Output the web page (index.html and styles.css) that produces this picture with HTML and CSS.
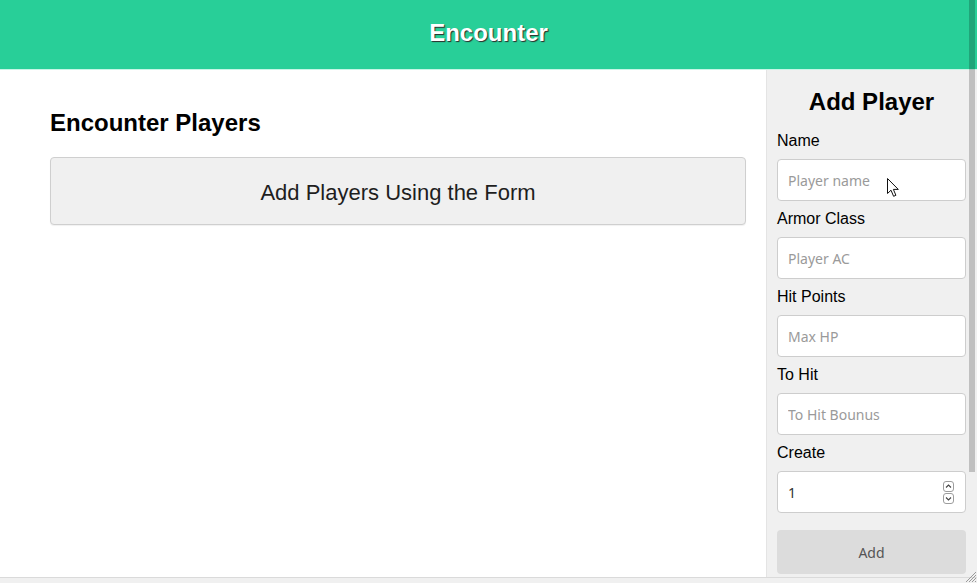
FILE: index.html
```html
<!DOCTYPE html>
<html>
<head>
<meta charset="utf-8">
<title>Encounter</title>
<link rel="stylesheet" href="styles.css">
</head>
<body>
<div class="viewport">
  <header class="topbar"><h1 class="brand">Encounter</h1></header>
  <div class="main">
    <section class="players">
      <h2 class="section-title">Encounter Players</h2>
      <div class="empty-box">Add Players Using the Form</div>
    </section>
    <aside class="sidebar">
      <h2 class="side-title">Add Player</h2>
      <label class="field-label">Name</label>
      <input class="field" type="text" placeholder="Player name">
      <label class="field-label">Armor Class</label>
      <input class="field" type="text" placeholder="Player AC">
      <label class="field-label">Hit Points</label>
      <input class="field" type="text" placeholder="Max HP">
      <label class="field-label">To Hit</label>
      <input class="field" type="text" placeholder="To Hit Bounus">
      <label class="field-label">Create</label>
      <div class="num-field">
        <input class="num-input" type="text" value="1">
        <div class="spinner">
          <span class="spin-btn"><svg width="9" height="9" viewBox="0 0 9 9"><path d="M2 5.5 L4.5 3 L7 5.5" fill="none" stroke="#444" stroke-width="1.1"/></svg></span>
          <span class="spin-btn"><svg width="9" height="9" viewBox="0 0 9 9"><path d="M2 3.5 L4.5 6 L7 3.5" fill="none" stroke="#444" stroke-width="1.1"/></svg></span>
        </div>
      </div>
      <button class="add-btn" type="button">Add</button>
    </aside>
  </div>
</div>
<div class="vscroll"><div class="vthumb"></div></div>
<div class="hscroll"></div>
<svg class="grip" width="14" height="14" viewBox="0 0 14 14">
  <path d="M13 3 L3 13 M13 6 L6 13 M13 9 L9 13 M13 12 L12 13" stroke="#9a9a9a" stroke-width="1"/>
</svg>
<svg class="cursor" width="13" height="20" viewBox="0 0 13 20">
  <path d="M0.5 0.5 L0.5 15.5 L4 12.2 L6.6 18.3 L8.9 17.3 L6.4 11.4 L11.3 11.4 Z" fill="#fff" stroke="#111" stroke-width="1" stroke-linejoin="round"/>
</svg>
</body>
</html>
```
FILE: styles.css
```css
html, body {
  margin: 0;
  padding: 0;
  overflow: hidden;
  background: #fff;
}
body {
  font-family: "Liberation Sans", Arial, sans-serif;
  color: #000;
}
.viewport {
  width: 977px;
  height: 583px;
  overflow: hidden;
}
.topbar {
  height: 69px;
  background: #28cf98;
  border-bottom: 1px solid #c6f6e6;
  display: flex;
  align-items: center;
  justify-content: center;
}
.brand {
  margin: 0;
  font-size: 24px;
  font-weight: bold;
  color: #fff;
  text-shadow: 1px 1px 1px #2b2b2b;
  line-height: 28px;
  padding-bottom: 3px;
}
.main {
  display: flex;
  min-height: 634px;
}
.players {
  flex: 1;
  padding: 39px 20px 0 50px;
}
.section-title {
  margin: 0 0 20px 0;
  font-size: 24px;
  line-height: 28px;
  font-weight: bold;
}
.empty-box {
  box-sizing: border-box;
  height: 68px;
  padding-top: 3px;
  background: #f0f0f0;
  border: 1px solid #cfcfcf;
  border-radius: 4px;
  box-shadow: 0 1px 1px rgba(0, 0, 0, 0.06);
  display: flex;
  align-items: center;
  justify-content: center;
  font-size: 22px;
  color: #1e1e1e;
}
.sidebar {
  width: 211px;
  box-sizing: border-box;
  background: #f0f0f0;
  border-left: 1px solid #e4e4e4;
  padding: 18px 11px 0 10px;
  display: flex;
  flex-direction: column;
}
.side-title {
  margin: 0 0 7px 0;
  font-size: 24px;
  line-height: 28px;
  font-weight: bold;
  text-align: center;
}
.field-label {
  display: block;
  font-size: 16px;
  line-height: 20px;
  padding-top: 8px;
  margin-bottom: 8px;
}
.field {
  box-sizing: border-box;
  height: 42px;
  width: 100%;
  border: 1px solid #cdcdcd;
  border-radius: 4px;
  background: #fff;
  padding: 0 10px;
  font-family: "Noto Sans", sans-serif;
  font-size: 14px;
  color: #333;
  margin: 0;
  outline: none;
}
.field::placeholder {
  color: #9a9a9a;
}
.num-field {
  box-sizing: border-box;
  height: 42px;
  border: 1px solid #cdcdcd;
  border-radius: 4px;
  background: #fff;
  display: flex;
  align-items: center;
  padding: 0 11px 0 10px;
}
.num-input {
  flex: 1;
  min-width: 0;
  border: none;
  outline: none;
  padding: 0;
  background: transparent;
  font-family: "Noto Sans", sans-serif;
  font-size: 14px;
  color: #333;
}
.spinner {
  display: flex;
  flex-direction: column;
  gap: 1px;
}
.spin-btn {
  width: 11px;
  height: 11px;
  box-sizing: border-box;
  border: 1px solid #9d9d9d;
  border-radius: 3px;
  display: flex;
  align-items: center;
  justify-content: center;
}
.spin-btn svg {
  display: block;
}
.add-btn {
  margin-top: 17px;
  height: 44px;
  border: none;
  border-radius: 4px;
  background: #dcdcdc;
  color: #555;
  font-family: "Noto Sans", sans-serif;
  font-size: 14px;
  padding: 0;
}
.vscroll {
  position: absolute;
  top: 0;
  right: 0;
  width: 9px;
  height: 577px;
}
.vthumb {
  margin-left: 1px;
  width: 6px;
  height: 472px;
  background: rgba(0, 0, 0, 0.2);
}
.hscroll {
  position: absolute;
  left: 0;
  right: 0;
  bottom: 0;
  height: 5px;
  background: #f0f0f0;
  border-top: 1px solid #dadada;
}
.grip {
  position: absolute;
  right: 0;
  bottom: 0;
}
.cursor {
  position: absolute;
  left: 887px;
  top: 178px;
}
```
